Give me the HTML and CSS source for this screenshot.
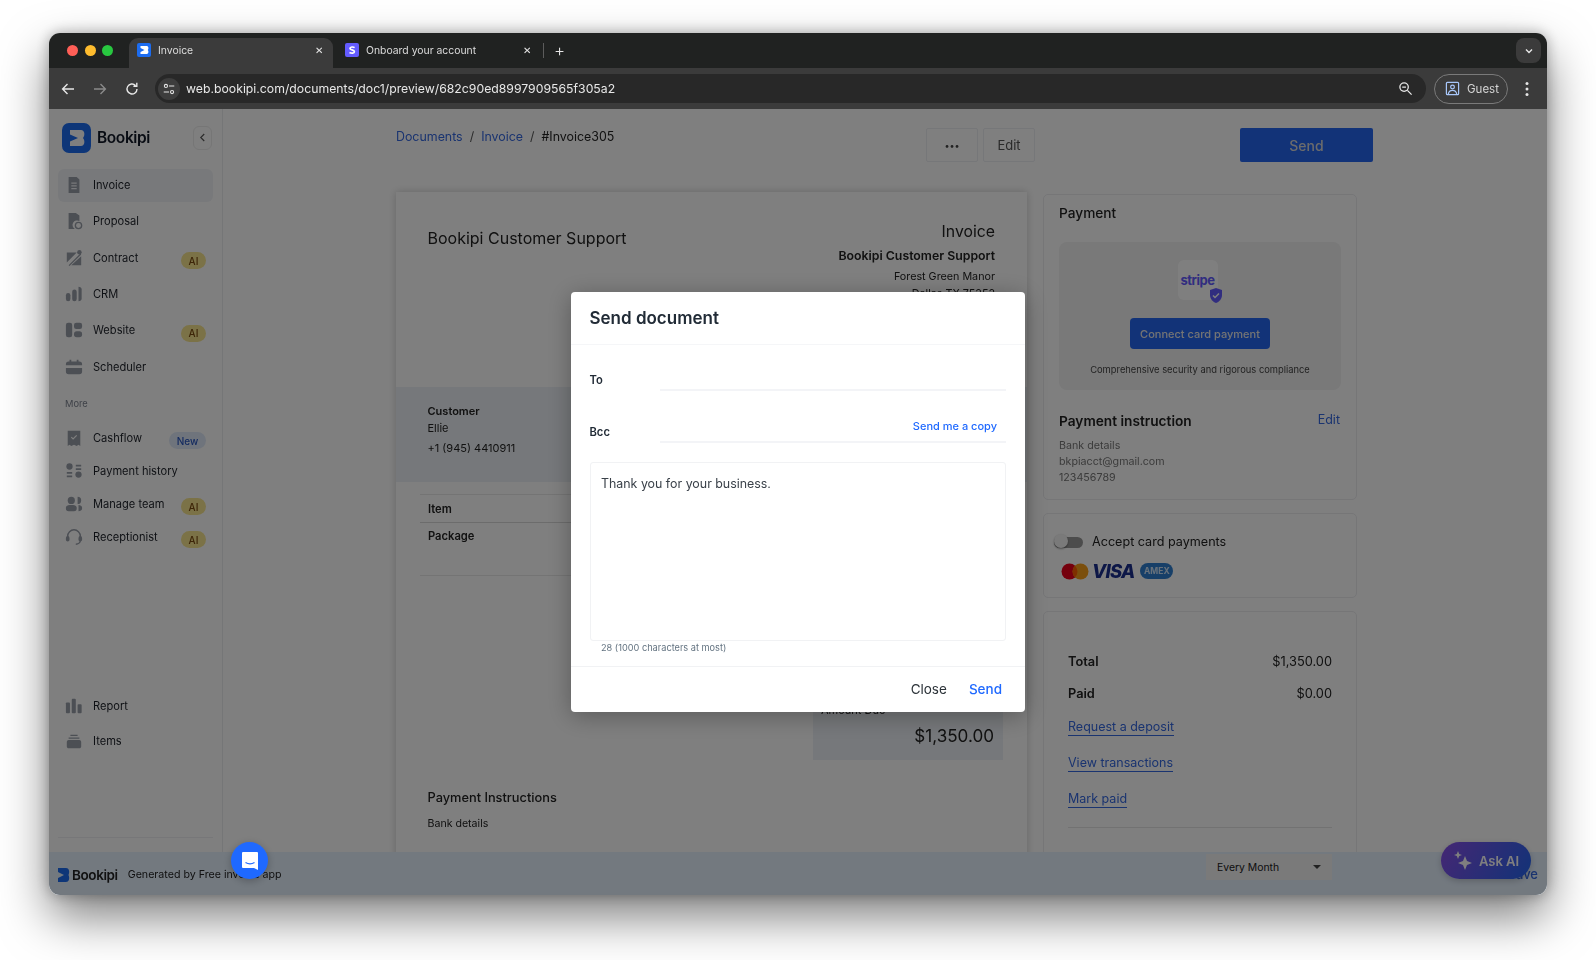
FILE: index.html
```html
<!DOCTYPE html>
<html lang="en">
<head>
<meta charset="utf-8">
<title>Invoice</title>
<link rel="stylesheet" href="styles.css">
</head>
<body>
<div class="window">
  <div class="tabstrip">
    <div class="lights"><i class="red"></i><i class="amber"></i><i class="green"></i></div>
    <div class="tab active">
      <svg class="fav" viewBox="0 0 14 14"><rect width="14" height="14" rx="2" fill="#1c6cf0"/><path d="M3.500 3h6c2 0 2.500 2.500 1.200 4 1.300 1.500.8 4-1.200 4h-6V9l4-2-4-2z" fill="#fff"/></svg>
      <span class="tab-title">Invoice</span><span class="tab-x">✕</span>
    </div>
    <div class="tab">
      <svg class="fav" viewBox="0 0 14 14"><rect width="14" height="14" rx="2" fill="#635bff"/><path d="M9.600 4.600C8.400 3.800 5 3.600 5 5.400 5 7.300 9.400 6.400 9.400 8.800 9.400 10.700 6 10.400 4.500 9.500" fill="none" stroke="#fff" stroke-width="1.700"/></svg>
      <span class="tab-title">Onboard your account</span><span class="tab-x">✕</span>
    </div>
    <span class="tab-sep"></span>
    <span class="tab-plus">+</span>
    <span class="tab-menu"><svg viewBox="0 0 10 10" width="10" height="10"><path d="M2 3.500 5 6.500 8 3.500" fill="none" stroke="#e8e8e8" stroke-width="1.400"/></svg></span>
  </div>
  <div class="toolbar">
    <div class="nav-icons">
      <svg viewBox="0 0 16 16" width="16" height="16"><path d="M14 8H3M7.500 3 2.600 8l4.900 5" fill="none" stroke="#e6e6e6" stroke-width="1.400"/></svg>
      <svg viewBox="0 0 16 16" width="16" height="16"><path d="M2 8h11M8.500 3l4.900 5-4.900 5" fill="none" stroke="#8a8a8a" stroke-width="1.400"/></svg>
      <svg viewBox="0 0 16 16" width="16" height="16"><path d="M13 8a5 5 0 1 1-1.500-3.600M12.800 1.800v3.400H9.400" fill="none" stroke="#e6e6e6" stroke-width="1.400"/></svg>
    </div>
    <div class="omnibox">
      <span class="site-btn"><svg viewBox="0 0 16 16" width="14" height="14"><g fill="none" stroke="#e6e6e6" stroke-width="1.200"><circle cx="4.500" cy="4.500" r="1.800"/><path d="M8 4.500h6M2 11.500h6"/><circle cx="11.500" cy="11.500" r="1.800"/></g></svg></span>
      <span class="url">web.bookipi.com/documents/doc1/preview/682c90ed8997909565f305a2</span>
      <svg class="zoom-ic" viewBox="0 0 16 16" width="15" height="15"><g fill="none" stroke="#e6e6e6" stroke-width="1.400"><circle cx="6.500" cy="6.500" r="4.500"/><path d="M4.500 6.500h4M10 10l4.500 4.500"/></g></svg>
    </div>
    <div class="guest">
      <svg viewBox="0 0 16 16" width="15" height="15"><g fill="none" stroke="#a8c7fa" stroke-width="1.300"><rect x="1.500" y="1.500" width="13" height="13" rx="1"/><circle cx="8" cy="6.500" r="2"/><path d="M3.500 14c.5-3 2.500-4 4.500-4s4 1 4.500 4"/></g></svg>
      <span>Guest</span>
    </div>
    <svg class="kebab" viewBox="0 0 4 16" width="4" height="16"><g fill="#e6e6e6"><circle cx="2" cy="2.500" r="1.500"/><circle cx="2" cy="8" r="1.500"/><circle cx="2" cy="13.500" r="1.500"/></g></svg>
  </div>

  <div class="page">
    <aside class="sidebar">
      <div class="brand">
        <svg class="brand-mark" viewBox="0 0 29 30"><rect width="29" height="30" rx="7" fill="#1c6cf0"/><path d="M8 7h11c3.500 0 4.500 4.800 2 8 2.500 3.200 1.500 8-2 8H8v-4.500l8-3.500-8-3.500z" fill="#fff"/></svg>
        <span class="brand-name">Bookipi</span>
        <span class="collapse"><svg viewBox="0 0 8 10" width="7" height="9"><path d="M6 1 2 5l4 4" fill="none" stroke="#555" stroke-width="1.300"/></svg></span>
      </div>
      <nav class="nav primary">
        <a class="item current"><svg viewBox="0 0 20 20"><path d="M4 1h9l3 3v15H4z"/><path d="M7 8h6M7 11h6M7 14h6" stroke="#f0f2f6" stroke-width="1.300"/></svg><span>Invoice</span></a>
        <a class="item"><svg viewBox="0 0 20 20"><path d="M4 1h8l4 3v6a5 5 0 0 0-5 9H4z"/><circle cx="15" cy="15" r="3.500" fill="none" stroke="#989ea9" stroke-width="1.500"/></svg><span>Proposal</span></a>
        <a class="item"><svg viewBox="0 0 20 20"><path d="M2 4h11L2 15zM18 8v10H7zM4 18l13-13 1 1L5 19z"/><circle cx="16" cy="3.500" r="2.500"/></svg><span>Contract</span><em class="pill ai">AI</em></a>
        <a class="item"><svg viewBox="0 0 20 20"><rect x="1" y="9" width="5" height="9" rx="2.500"/><rect x="8" y="5" width="5" height="13" rx="2.500"/><path d="M15 2c2 0 3.500 1 3.500 3v10c0 2-1.500 3-3.500 3z"/></svg><span>CRM</span></a>
        <a class="item"><svg viewBox="0 0 20 20"><rect x="1" y="2" width="7" height="16" rx="2.500"/><rect x="10" y="2" width="9" height="7" rx="2.500"/><rect x="10" y="11.500" width="9" height="6.500" rx="3"/></svg><span>Website</span><em class="pill ai">AI</em></a>
        <a class="item"><svg viewBox="0 0 20 20"><path d="M1 7c0-2 1-3 3-3h1V2h2v2h6V2h2v2h1c2 0 3 1 3 3v1H1zM1 11h18v4c0 2-1 3-3 3H4c-2 0-3-1-3-3z"/></svg><span>Scheduler</span></a>
      </nav>
      <div class="nav-head">More</div>
      <nav class="nav secondary">
        <a class="item"><svg viewBox="0 0 20 20"><path d="M3 2h14v17l-2-1.500-2 1.500-3-1.500L7 19l-2-1.500L3 19z"/><path d="M7 9l2 2 4-4" fill="none" stroke="#fff" stroke-width="1.300"/></svg><span>Cashflow</span><em class="pill new">New</em></a>
        <a class="item"><svg viewBox="0 0 20 20"><circle cx="5" cy="5" r="3.500"/><circle cx="15" cy="14" r="3.500"/><path d="M2 11h6v2H2zM2 15h6v2H2zM12 3h6v2h-6zM12 7h6v2h-6z"/></svg><span>Payment history</span></a>
        <a class="item"><svg viewBox="0 0 20 20"><circle cx="7" cy="6" r="4"/><path d="M14 2a4 4 0 0 1 0 8zM1 14c0-2 2-3 4-3h4c2 0 4 1 4 3v1c0 2-1 3-3 3H4c-2 0-3-1-3-3zM15 11c2 0 4 1 4 3v1c0 2-2 3-4 3z"/></svg><span>Manage team</span><em class="pill ai">AI</em></a>
        <a class="item"><svg viewBox="0 0 20 20"><path d="M3 11V9a7 7 0 0 1 14 0v5c0 2-2 4-5 4" fill="none" stroke="#989ea9" stroke-width="1.600"/><rect x="1" y="9" width="4" height="6" rx="2"/><rect x="15" y="9" width="4" height="6" rx="2"/></svg><span>Receptionist</span><em class="pill ai">AI</em></a>
      </nav>
      <nav class="nav tertiary">
        <a class="item"><svg viewBox="0 0 20 20"><rect x="1" y="6" width="4.500" height="12" rx="1"/><rect x="7.500" y="2" width="4.500" height="16" rx="1"/><rect x="14" y="8" width="4.500" height="10" rx="1"/></svg><span>Report</span></a>
        <a class="item"><svg viewBox="0 0 20 20"><path d="M6 3h8v1.500H6zM4 6h12v1.500H4zM2 11c0-1 1-2 2-2h12c1 0 2 1 2 2v5c0 1-1 2-2 2H4c-1 0-2-1-2-2z"/></svg><span>Items</span></a>
      </nav>
      <div class="side-rule"></div>
    </aside>

    <main class="main">
      <div class="topbar">
        <div class="crumbs"><a>Documents</a><span>/</span><a>Invoice</a><span>/</span><b>#Invoice305</b></div>
        <button class="ghost dots">•••</button>
        <button class="ghost">Edit</button>
        <button class="primary-btn">Send</button>
      </div>
      <div class="columns">
        <section class="doc">
          <div class="doc-head">
            <h2 class="biz">Bookipi Customer Support</h2>
            <div class="doc-meta">
              <div class="doc-type">Invoice</div>
              <div class="doc-biz">Bookipi Customer Support</div>
              <div class="doc-addr">Forest Green Manor</div>
              <div class="doc-addr">Dallas TX 75252</div>
            </div>
          </div>
          <div class="customer">
            <strong>Customer</strong>
            <span>Ellie</span>
            <span class="phone">+1 (945) 4410911</span>
          </div>
          <div class="table">
            <div class="th">Item</div>
            <div class="td">Package</div>
          </div>
          <div class="amount">
            <span class="amount-label">Amount Due</span>
            <span class="amount-val">$1,350.00</span>
          </div>
          <div class="doc-pay">
            <h3>Payment Instructions</h3>
            <p>Bank details</p>
          </div>
        </section>

        <div class="rail">
          <section class="card pay-card">
            <h3 class="card-title">Payment</h3>
            <div class="stripe">
              <div class="stripe-logo"><span>stripe</span>
                <svg class="shield" viewBox="0 0 14 15"><path d="M7 0l6 2v5c0 4-3 7-6 8-3-1-6-4-6-8V2z" fill="#635bff"/><path d="M4 7.500l2 2 4-4" fill="none" stroke="#fff" stroke-width="1.500"/></svg>
              </div>
              <button class="connect">Connect card payment</button>
              <p class="stripe-note">Comprehensive security and rigorous compliance</p>
            </div>
            <div class="instr-head"><h3>Payment instruction</h3><a>Edit</a></div>
            <div class="instr">Bank details<br>bkpiacct@gmail.com<br>123456789</div>
          </section>
          <section class="card accept-card">
            <div class="accept"><span class="toggle"><i></i></span><span>Accept card payments</span></div>
            <div class="brands">
              <svg width="28" height="17" viewBox="0 0 28 17"><circle cx="8.500" cy="8.500" r="8" fill="#eb001b"/><circle cx="19.500" cy="8.500" r="8" fill="#f79e1b"/><path d="M14 2.700a8 8 0 0 1 0 11.600 8 8 0 0 1 0-11.600z" fill="#ff5f00"/></svg>
              <span class="visa">VISA</span>
              <span class="amex">AMEX</span>
            </div>
          </section>
          <section class="card totals">
            <div class="line"><b>Total</b><span>$1,350.00</span></div>
            <div class="line"><b>Paid</b><span>$0.00</span></div>
            <a class="tlink">Request a deposit</a>
            <a class="tlink">View transactions</a>
            <a class="tlink">Mark paid</a>
            <div class="tot-rule"></div>
          </section>
        </div>
      </div>
    </main>

    <footer class="bar">
      <svg class="bar-mark" viewBox="0 0 12 14"><path d="M0 0h8c3 0 4 3.500 2.500 7C12 10.500 11 14 8 14H0v-4l6-3-6-3z" fill="#1c6cf0"/></svg>
      <span class="bar-brand">Bookipi</span>
      <span class="bar-text">Generated by Free invoice app</span>
      <span class="bar-select">Every Month<i></i></span>
      <a class="bar-save">Save</a>
    </footer>
    <button class="ask">
      <svg viewBox="0 0 20 20" width="20" height="20"><path d="M12 5l2 5 5 2-5 2-2 5-2-5-5-2 5-2zM5 0l1.200 3L9 4 6.200 5 5 8 3.800 5 1 4l2.800-1z" fill="#fff"/></svg>
      <span>Ask AI</span>
    </button>

    <div class="scrim"></div>

    <div class="modal">
      <h1 class="modal-title">Send document</h1>
      <div class="modal-body">
        <div class="field to"><label>To</label><div class="input"></div></div>
        <div class="field bcc"><label>Bcc</label><div class="input"><a>Send me a copy</a></div></div>
        <div class="message">Thank you for your business.</div>
        <div class="count">28 (1000 characters at most)</div>
      </div>
      <div class="modal-foot"><button class="link dark">Close</button><button class="link blue">Send</button></div>
    </div>

    <button class="chat"><svg viewBox="0 0 20 20" width="20" height="20"><path d="M3 1h14a1 1 0 0 1 1 1v17l-4-2H3a1 1 0 0 1-1-1V2a1 1 0 0 1 1-1z" fill="#fff"/><path d="M5.500 11.500c2.500 1.500 6.500 1.500 9 0" fill="none" stroke="#1f69ff" stroke-width="1.200"/></svg></button>
  </div>
</div>
</body>
</html>
```

FILE: styles.css
```css
* { box-sizing: border-box; }
html, body { margin: 0; height: 100%; }
body {
  background: #fff;
  padding: 33px 49px 0;
  font-family: Inter, "Liberation Sans", sans-serif;
  overflow: hidden;
}
button { font-family: inherit; border: 0; cursor: pointer; }
h1, h2, h3, p { margin: 0; }
a { color: inherit; }

.window {
  width: 1498px;
  height: 862px;
  border-radius: 11px;
  overflow: hidden;
  display: flex;
  flex-direction: column;
  box-shadow: 0 22px 48px rgba(0,0,0,.5), 0 0 14px rgba(0,0,0,.3);
  background: #fff;
  filter: blur(.3px);
}

/* browser chrome */
.tabstrip {
  height: 35px;
  flex: none;
  background: #202221;
  display: flex;
  align-items: flex-end;
  color: #dcdcdc;
  font-size: 10.400px;
  padding-left: 18px;
}
.lights { display: flex; gap: 6.500px; align-self: center; margin-right: 16px; }
.lights i { width: 11px; height: 11px; border-radius: 50%; display: block; }
.red { background: #ff5f57; }
.amber { background: #febc2e; }
.green { background: #28c840; }
.tab {
  width: 204px;
  height: 30px;
  display: flex;
  align-items: center;
  padding: 0 9px 6px 8px;
  gap: 7px;
  border-radius: 9px 9px 0 0;
}
.tab.active { background: #3b3b3b; margin-right: 4px; }
.fav { width: 14px; height: 14px; flex: none; }
.tab-title { flex: 1; }
.tab-x { font-size: 10px; color: #e6e6e6; margin-right: 1px; }
.tab-sep { width: 1px; height: 15px; background: #5c5c5c; align-self: center; margin: 0 0 0 2px; }
.tab-plus { align-self: center; font-size: 17px; font-weight: 300; color: #e6e6e6; margin-left: 10px; line-height: 1; margin-top: -1px; }
.tab-menu {
  margin-left: auto;
  margin-right: 6px;
  width: 25px;
  height: 25px;
  border-radius: 8px;
  background: #3b3b3b;
  display: flex;
  align-items: center;
  justify-content: center;
  align-self: center;
}
.toolbar {
  height: 41px;
  flex: none;
  background: #3b3b3b;
  display: flex;
  align-items: center;
  padding-left: 11px;
  color: #e6e6e6;
}
.nav-icons { display: flex; gap: 16px; margin-right: 15px; }
.omnibox {
  width: 1271px;
  height: 29px;
  background: #282828;
  border-radius: 15px;
  display: flex;
  align-items: center;
  padding: 0 13px 0 3px;
}
.site-btn {
  width: 22px;
  height: 22px;
  border-radius: 50%;
  background: #3d3d3d;
  display: flex;
  align-items: center;
  justify-content: center;
  margin-right: 6px;
}
.url { font-size: 12.250px; color: #e8e8e8; flex: 1; }
.guest {
  margin-left: 8px;
  width: 74px;
  height: 30px;
  border: 1px solid #7a7a7a;
  border-radius: 15px;
  display: flex;
  align-items: center;
  gap: 7px;
  padding-left: 10px;
  font-size: 11.500px;
  color: #d6d6d6;
}
.kebab { margin-left: 17px; }

/* page */
.page { flex: 1; position: relative; display: flex; min-height: 0; background: #fff; overflow: hidden; }
.sidebar {
  width: 174px;
  flex: none;
  border-right: 1px solid #ebecef;
  display: flex;
  flex-direction: column;
  padding: 14px 9px 0;
  color: #1d2129;
  position: relative;
}
.brand { display: flex; align-items: center; height: 29px; padding-left: 4px; margin-bottom: 16.700px; }
.brand-mark { width: 29px; height: 30px; flex: none; }
.brand-name { font-size: 15.500px; font-weight: 600; letter-spacing: -.4px; margin-left: 6px; color: #111827; }
.collapse {
  margin-left: auto;
  width: 19px;
  height: 24px;
  border: 1px solid #ececec;
  border-radius: 6px;
  display: flex;
  align-items: center;
  justify-content: center;
  margin-right: 1px;
}
.nav { display: flex; flex-direction: column; }
.primary { gap: 3.300px; }
.secondary { margin-top: 12px; }
.tertiary { margin-top: 136px; gap: 2px; }
.item {
  height: 33px;
  display: flex;
  align-items: center;
  padding-left: 7px;
  font-size: 11.100px;
  border-radius: 6px;
  position: relative;
}
.item.current { background: #f1f3f7; }
.item svg { width: 18px; height: 18px; flex: none; fill: #989ea9; margin-right: 10px; }
.pill {
  position: absolute;
  right: 7px;
  top: 11px;
  height: 17px;
  border-radius: 9px;
  font-size: 10px;
  font-style: normal;
  font-weight: 500;
  display: flex;
  align-items: center;
  justify-content: center;
}
.ai { width: 25px; background: #f6e48e; color: #7a4a10; }
.new { width: 37px; background: #dfe9f8; color: #2a57c0; }
.nav-head { font-size: 9.300px; color: #7d8390; margin: 15.300px 0 0 7px; }
.side-rule { position: absolute; left: 9px; right: 9px; top: 728px; height: 1px; background: #eeeff2; }

.main { flex: 1; min-width: 0; padding: 19px 0 0 173px; overflow: hidden; }
.topbar { width: 977px; height: 34px; display: flex; align-items: flex-start; margin-bottom: 30px; }
.crumbs { flex: 1; display: flex; gap: 7px; font-size: 12.400px; line-height: 18px; color: #555; }
.crumbs a { color: #3568e0; }
.crumbs b { font-weight: 400; color: #222; }
.ghost {
  width: 52px;
  height: 34px;
  background: #fff;
  border: 1px solid #eceef2;
  border-radius: 2px;
  color: #555;
  font-size: 13px;
  margin-right: 5px;
}
.dots { font-size: 9px; letter-spacing: 0; color: #444; }
.primary-btn {
  width: 133px;
  height: 34px;
  margin-left: 200px;
  background: #2466f0;
  color: #d8d8d8;
  font-size: 14px;
  font-weight: 500;
  border-radius: 2px;
}
.columns { display: flex; gap: 16px; align-items: flex-start; }
.doc {
  width: 631px;
  height: 700px;
  flex: none;
  background: #fff;
  box-shadow: 0 0 8px rgba(0,0,0,.2);
  color: #222;
}
.doc-head { height: 195px; padding: 36px 32px 0 31.500px; display: flex; justify-content: space-between; }
.biz { font-size: 16px; font-weight: 400; margin-top: -.5px; line-height: 20px; }
.doc-meta { text-align: right; font-size: 10.750px; margin-top: -7px; }
.doc-type { font-size: 15.800px; line-height: 22px; }
.doc-biz { font-size: 12.300px; font-weight: 600; line-height: 16px; margin-top: 5px; }
.doc-addr { line-height: 17px; }
.doc-biz + .doc-addr { margin-top: 4px; }
.customer {
  height: 95px;
  background: #edf1f6;
  padding: 16px 31.500px;
  display: flex;
  flex-direction: column;
  font-size: 11px;
  line-height: 17px;
}
.customer strong { font-weight: 600; }
.phone { margin-top: 2.500px; }
.table { margin: 12px 24px 0; font-size: 11.200px; font-weight: 600; }
.th { height: 29px; border-top: 1px solid #e9e9e9; border-bottom: 1px solid #d9d9d9; padding: 7px 8px 0; }
.td { height: 53px; border-bottom: 1px solid #e9e9e9; padding: 6px 8px 0; }
.amount {
  margin: 124px 24px 0 auto;
  width: 190px;
  height: 60px;
  background: #edf1f6;
  padding: 3px 9px 0 8px;
  display: flex;
  flex-direction: column;
  align-items: flex-end;
  font-size: 11px;
}
.amount-label { align-self: flex-start; margin-left: 0; }
.amount-val { font-size: 17.100px; margin-top: 8px; }
.doc-pay { padding: 30px 31.500px 0; }
.doc-pay h3 { font-size: 12.800px; font-weight: 500; line-height: 16px; }
.doc-pay p { font-size: 10.600px; margin-top: 11px; }

.rail { width: 314px; flex: none; margin-top: 2px; display: flex; flex-direction: column; gap: 13px; }
.card { border: 1px solid #ececef; border-radius: 5px; background: #fff; color: #222; }
.pay-card { height: 306px; padding: 9px 15px 0; }
.card-title { font-size: 13.700px; font-weight: 500; line-height: 18px; }
.stripe {
  margin-top: 20px;
  height: 148px;
  background: #f2f2f2;
  border-radius: 8px;
  display: flex;
  flex-direction: column;
  align-items: center;
  padding-top: 18px;
}
.stripe-logo {
  width: 40px;
  height: 40px;
  background: #fff;
  border-radius: 6px;
  display: flex;
  align-items: center;
  justify-content: center;
  position: relative;
  margin-left: -5px;
}
.stripe-logo span { color: #635bff; font-size: 13px; font-weight: 700; letter-spacing: -.5px; }
.shield { position: absolute; width: 14px; height: 15px; right: -5px; bottom: -3px; }
.connect {
  margin-top: 18px;
  width: 140px;
  height: 31px;
  border-radius: 4px;
  background: #2466f0;
  color: #e8e8e8;
  font-size: 11px;
  font-weight: 500;
}
.stripe-note { font-size: 9.350px; color: #444; margin-top: 15px; line-height: 12px; }
.instr-head { display: flex; justify-content: space-between; margin-top: 22px; align-items: center; }
.instr-head h3 { font-size: 13.700px; font-weight: 600; line-height: 18px; }
.instr-head a { color: #3568e0; font-size: 12.500px; margin-right: 1px; margin-top: -3px; }
.instr { font-size: 10.700px; line-height: 16px; color: #777; margin-top: 8px; }
.accept-card { height: 85px; padding: 18px 0 0 10px; }
.accept { display: flex; align-items: center; gap: 9px; font-size: 12.600px; line-height: 20px; }
.toggle { width: 29px; height: 11px; background: #999; border-radius: 6px; position: relative; display: block; }
.toggle i { position: absolute; left: 0; top: -3px; width: 14px; height: 14px; border-radius: 50%; background: #f5f5f5; box-shadow: 0 1px 2px rgba(0,0,0,.4); }
.brands { display: flex; align-items: center; gap: 3px; margin: 10px 0 0 7px; height: 18px; }
.visa { font-size: 18.500px; font-weight: 800; font-style: italic; color: #1a2f8f; letter-spacing: -.8px; margin-right: 3px; }
.amex {
  width: 33px;
  height: 16px;
  border-radius: 8px;
  background: #2f7fd0;
  color: #cfe3f7;
  font-size: 8.500px;
  font-weight: 700;
  display: flex;
  align-items: center;
  justify-content: center;
}
.totals { height: 320px; padding: 39px 24px 0; font-size: 12.800px; }
.line { display: flex; justify-content: space-between; height: 32px; line-height: 22px; }
.line b { font-weight: 600; }
.tlink { display: table; color: #3568e0; border-bottom: 1px solid #3568e0; margin-bottom: 19px; line-height: 16px; margin-top: 0; font-size: 12.500px; }
.line + .tlink { margin-top: 4px; }
.tot-rule { height: 1px; background: #e4e4e4; margin-top: 6px; }

.bar {
  position: absolute;
  left: 0;
  right: 0;
  bottom: 0;
  height: 43px;
  background: #e6f2ff;
  display: flex;
  align-items: center;
  padding: 2px 0 0 9px;
  color: #222;
}
.bar-mark { width: 12px; height: 14px; }
.bar-brand { font-size: 13.500px; font-weight: 600; letter-spacing: -.4px; margin-left: 2px; }
.bar-text { font-size: 10.650px; margin-left: 10px; }
.bar-select {
  position: absolute;
  left: 1157px;
  top: 2px;
  width: 126px;
  height: 26px;
  background: #f4f4f4;
  font-size: 10.400px;
  padding: 0 11px;
  display: flex;
  align-items: center;
  justify-content: space-between;
}
.bar-select i { border: 4px solid transparent; border-top-color: #444; border-bottom: 0; }
.bar-save { position: absolute; right: 9px; top: 14px; font-size: 13px; font-weight: 500; color: #3568e0; }
.ask {
  position: absolute;
  left: 1392px;
  top: 733px;
  width: 90px;
  height: 37px;
  border-radius: 19px;
  background: linear-gradient(120deg, #8a4fe8, #2466f0);
  color: #fff;
  font-size: 13px;
  font-weight: 600;
  display: flex;
  align-items: center;
  justify-content: center;
  gap: 6px;
  box-shadow: 0 2px 6px rgba(0,0,0,.2);
}
.scrim { position: absolute; inset: 0; background: rgba(0,0,0,.5); }

.modal {
  position: absolute;
  left: 522px;
  top: 183px;
  width: 454px;
  height: 420px;
  background: #fff;
  border-radius: 4px;
  display: flex;
  flex-direction: column;
  box-shadow: 0 4px 24px rgba(0,0,0,.3);
}
.modal-title {
  height: 53px;
  flex: none;
  border-bottom: 1px solid #f5f6f8;
  font-size: 17px;
  font-weight: 600;
  color: #212b36;
  padding: 15px 18.500px 0;
  line-height: 22px;
}
.modal-body { flex: 1; padding: 0 19px; border-bottom: 1px solid #f1f2f4; }
.field { display: flex; align-items: flex-end; font-size: 11.200px; font-weight: 600; color: #212b36; }
.field label { width: 70px; flex: none; padding-bottom: 4px; margin-left: -.5px; }
.to { height: 46px; }
.bcc { height: 52px; }
.input {
  flex: 1;
  height: 30px;
  border-bottom: 2px solid #f3f4f7;
  text-align: right;
  padding: 6px 9px 0 0;
  font-size: 11px;
  font-weight: 500;
  color: #1f69ff;
}
.message {
  margin-top: 19px;
  height: 179px;
  border: 1px solid #f1f2f4;
  border-radius: 3px;
  padding: 12px 10px;
  font-size: 12.400px;
  line-height: 18px;
  color: #3a4149;
}
.count { font-size: 9.200px; color: #637381; padding: 1px 11px; line-height: 12px; }
.modal-foot { height: 45px; flex: none; display: flex; justify-content: flex-end; align-items: center; gap: 22px; padding: 0 23px 2px 0; }
.link { background: none; font-size: 13.500px; padding: 0; }
.dark { color: #2b3238; }
.blue { color: #1f69ff; font-weight: 500; }
.chat {
  position: absolute;
  left: 182px;
  top: 733px;
  width: 37px;
  height: 37px;
  border-radius: 50%;
  background: #1f69ff;
  display: flex;
  align-items: center;
  justify-content: center;
  padding: 0;
  box-shadow: 0 2px 8px rgba(0,0,0,.25);
}
```
